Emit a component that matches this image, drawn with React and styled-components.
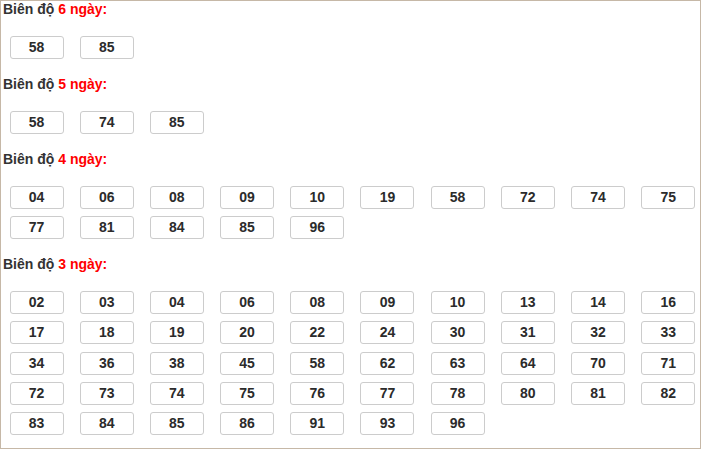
import React from 'react'
import styled, { createGlobalStyle } from 'styled-components'

const GlobalStyle = createGlobalStyle`
    html, body {
        margin: 0;
        padding: 0;
        background: #fff;
    }
`

const Page = styled.div`
    box-sizing: border-box;
    width: 701px;
    height: 449px;
    border: 1px solid #c6b8a7;
    padding: 0 2px;
    font-family: "Liberation Sans", Arial, sans-serif;
    background: #fff;
    overflow: hidden;
`

const Group = styled.section`
    padding-bottom: 17.5px;
`

const Title = styled.div`
    height: 17px;
    line-height: 17px;
    font-size: 14px;
    font-weight: bold;
    color: #333;
`

const Red = styled.span`
    color: #f00;
`

const Grid = styled.div`
    display: grid;
    grid-template-columns: repeat(10, 70.2px);
    row-gap: 7.4px;
    padding: 17.5px 0 0 6.5px;
`

const Num = styled.div`
    box-sizing: border-box;
    width: 54px;
    height: 23px;
    line-height: 21px;
    border: 1px solid #ccc;
    border-radius: 3px;
    text-align: center;
    font-size: 14px;
    font-weight: bold;
    color: #2b2b2b;
`

const groups = [
    { days: 6, nums: ['58', '85'] },
    { days: 5, nums: ['58', '74', '85'] },
    { days: 4, nums: ['04', '06', '08', '09', '10', '19', '58', '72', '74', '75', '77', '81', '84', '85', '96'] },
    {
        days: 3,
        nums: [
            '02', '03', '04', '06', '08', '09', '10', '13', '14', '16',
            '17', '18', '19', '20', '22', '24', '30', '31', '32', '33',
            '34', '36', '38', '45', '58', '62', '63', '64', '70', '71',
            '72', '73', '74', '75', '76', '77', '78', '80', '81', '82',
            '83', '84', '85', '86', '91', '93', '96',
        ],
    },
]

export default function App() {
    return (
        <>
            <GlobalStyle />
            <Page>
                {groups.map(g => (
                    <Group key={g.days}>
                        <Title>
                            Biên độ <Red>{g.days} ngày:</Red>
                        </Title>
                        <Grid>
                            {g.nums.map((n, idx) => (
                                <Num key={`${g.days}-${idx}`}>{n}</Num>
                            ))}
                        </Grid>
                    </Group>
                ))}
            </Page>
        </>
    )
}
